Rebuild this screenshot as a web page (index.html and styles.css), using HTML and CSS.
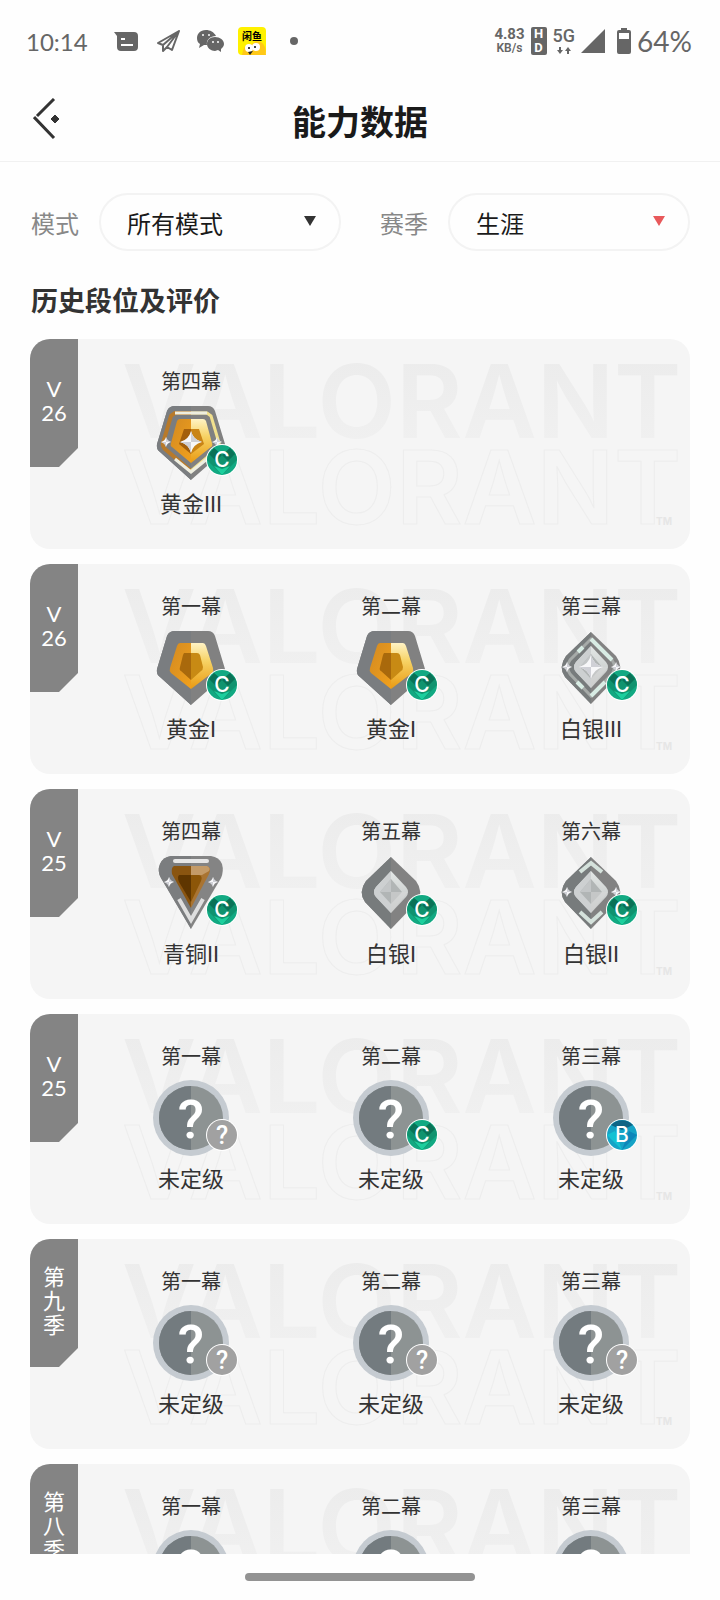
FILE: index.html
```html
<!DOCTYPE html>
<html lang="zh-CN">
<head>
  <meta charset="UTF-8" />
  <meta name="viewport" content="width=device-width, initial-scale=1" />
  <title>能力数据</title>
  <link rel="stylesheet" href="styles.css">
</head>
<body>

<!-- shared shapes -->
<svg class="defs" aria-hidden="true">
  <defs>
    <linearGradient id="goldL" x1="0" y1="0" x2="1" y2="1">
      <stop offset="0" stop-color="#d38a22" /><stop offset="1" stop-color="#f0a01c" />
    </linearGradient>
    <linearGradient id="goldR" x1="0" y1="0" x2="0" y2="1">
      <stop offset="0" stop-color="#fff3c4" /><stop offset=".4" stop-color="#f6d264" /><stop offset="1" stop-color="#e99a12" />
    </linearGradient>
    <linearGradient id="silverR" x1="0" y1="0" x2="0" y2="1">
      <stop offset="0" stop-color="#e3e7e6" /><stop offset="1" stop-color="#bfc2c1" />
    </linearGradient>
    <linearGradient id="fade" x1="0" y1="0" x2="0" y2="1">
      <stop offset="0" stop-color="#ebebeb" /><stop offset="1" stop-color="#f1f1f1" />
    </linearGradient>

    <symbol id="star" viewBox="-10 -10 20 20">
      <path d="M0-10Q2-2 10 0Q2 2 0 10Q-2 2-10 0Q-2-2 0-10Z" fill="#f7f7f9" />
      <path d="M0-10Q2-2 10 0L0 0Z M0 0V10Q-2 2-10 0Z" fill="#cfd0d6" />
    </symbol>
    <symbol id="pentagon" viewBox="0 0 76 76">
      <path d="M22 1H55Q60 1 62 6L72 39Q73 44 70 47L38 75L7 47Q3 44 4 39L14 6Q16 1 22 1Z" fill="#818181" />
      <path d="M22 1H38V75L7 47Q3 44 4 39L14 6Q16 1 22 1Z" fill="#7a7d80" />
    </symbol>
    <symbol id="diamond" viewBox="0 0 76 76">
      <path d="M38 2L63 26Q71 37 64 47L38 74L12 47Q5 37 13 26Z" fill="#828282" />
      <path d="M38 2V74L12 47Q5 37 13 26Z" fill="#777b7c" />
    </symbol>
    <symbol id="silver-gem" viewBox="0 0 76 76">
      <path d="M38 16L53 32Q57 37 53 42L38 58L23 42Q19 37 23 32Z" fill="url(#silverR)" />
      <path d="M38 16V58L23 42Q19 37 23 32Z" fill="#cdd0d1" />
      <path d="M38 24L49 37L38 49L27 37Z" fill="#b1b5b5" />
      <path d="M38 24V37H27Z" fill="#c3c6c7" />
      <path d="M38 37H55L38 58Z" fill="#d9dad9" opacity=".5" />
    </symbol>

    <symbol id="gold1" viewBox="0 0 76 76">
      <use href="#pentagon" />
      <path d="M27 13H38V59L18 43Q16 41 17 38L24 16Q25 13 27 13Z" fill="url(#goldL)" />
      <path d="M38 13H50Q52 13 53 16L60 38Q61 41 59 43L38 59Z" fill="url(#goldR)" />
      <path d="M31 23H38V50L28 41Q26 40 27 37L30 25Z" fill="#a9690c" />
      <path d="M38 23H44Q46 23 47 25L50 37Q50 40 48 41L38 50Z" fill="#c88a14" />
    </symbol>
    <symbol id="gold3" viewBox="0 0 76 76">
      <use href="#pentagon" />
      <path d="M38 8H22L18 11L10 38Q9 41 12 44L38 66" fill="none" stroke="#b87a2a" stroke-width="4" />
      <path d="M38 8H54L58 11L66 38Q67 41 64 44L38 66" fill="none" stroke="#f1e08e" stroke-width="3" />
      <path d="M22 8H54M22 54L38 67L54 54" fill="none" stroke="#eeeee0" stroke-width="3" />
      <path d="M27 14H38V58L19 42Q17 41 18 38L24 16Q25 14 27 14Z" fill="url(#goldL)" />
      <path d="M38 14H50Q52 14 53 16L59 38Q60 41 58 42L38 58Z" fill="url(#goldR)" />
      <path d="M31 24H38V49L26 39Z" fill="#a35f0c" />
      <path d="M38 24H46L51 39L38 49Z" fill="#c98416" />
      <use href="#star" x="27" y="26" width="22" height="22" />
      <use href="#star" x="8" y="32" width="10" height="10" />
      <use href="#star" x="59" y="32" width="10" height="10" />
    </symbol>
    <symbol id="bronze2" viewBox="0 0 76 76">
      <path d="M18 1H58Q66 2 69 9Q71 16 68 23L38 74L8 23Q4 16 7 9Q10 2 18 1Z" fill="#848484" />
      <path d="M18 1H38V74L8 23Q4 16 7 9Q10 2 18 1Z" fill="#7b7d7f" />
      <path d="M22 6H54" stroke="#e6e6e6" stroke-width="4" stroke-linecap="round" />
      <path d="M26 44L38 65L50 44" fill="none" stroke="#dedede" stroke-width="4" />
      <path d="M21 11H38V53L19 19Q18 12 21 11Z" fill="#8a5510" />
      <path d="M38 11H54Q59 13 56 19L38 53Z" fill="#a97432" />
      <path d="M38 11H54Q58 13 56 16L49 20H38Z" fill="#c49b68" />
      <path d="M26 20H38V47L26 27Q24 22 26 20Z" fill="#5f3600" />
      <path d="M38 20H46Q50 21 48 26L38 47Z" fill="#8c5608" />
      <use href="#star" x="11" y="22" width="10" height="10" />
      <use href="#star" x="55" y="22" width="10" height="10" />
    </symbol>
    <symbol id="silver1" viewBox="0 0 76 76">
      <use href="#diamond" />
      <use href="#silver-gem" />
    </symbol>
    <symbol id="silver2" viewBox="0 0 76 76">
      <use href="#diamond" />
      <path d="M27 17L38 8L49 17M27 57L38 67L49 57" fill="none" stroke="#d5e2dc" stroke-width="4" />
      <use href="#silver-gem" />
      <use href="#star" x="9" y="32" width="10" height="10" />
      <use href="#star" x="58" y="32" width="10" height="10" />
    </symbol>
    <symbol id="silver3" viewBox="0 0 76 76">
      <use href="#diamond" />
      <path d="M38 9L59 30Q64 37 59 44L38 66L17 44Q12 37 17 30Z" fill="none" stroke="#a6aaa8" stroke-width="3" />
      <path d="M38 9L59 30M38 66L52 52M25 22L30 17M24 52L30 58" fill="none" stroke="#d8ece4" stroke-width="4" />
      <use href="#silver-gem" />
      <use href="#star" x="26" y="25" width="24" height="24" />
      <use href="#star" x="9" y="32" width="10" height="10" />
      <use href="#star" x="58" y="32" width="10" height="10" />
    </symbol>
    <symbol id="unranked" viewBox="0 0 76 76">
      <circle cx="38" cy="38" r="38" fill="#c5cbd1" />
      <circle cx="38" cy="38" r="32" fill="#8d9393" />
      <path d="M38 6A32 32 0 0 0 38 70Z" fill="#737b7f" />
      <text class="emblem-mark" x="38" y="58" text-anchor="middle">?</text>
    </symbol>

    <symbol id="grade-c" viewBox="0 0 32 32">
      <circle cx="16" cy="16" r="16" fill="#fff" />
      <circle cx="16" cy="16" r="15" fill="#12a982" />
      <path d="M1 16A15 15 0 0 1 8 4L16 11L24 4A15 15 0 0 1 31 16L16 31Z" fill="#10936f" />
      <path d="M8 4L16 11L10 17L3 10Z M24 4L16 11L22 17L29 10Z" fill="#0a7257" />
      <path d="M8 22L16 31L24 22L16 25Z" fill="#1ccf9d" />
      <text class="badge-mark" x="16" y="23" text-anchor="middle">C</text>
    </symbol>
    <symbol id="grade-b" viewBox="0 0 32 32">
      <circle cx="16" cy="16" r="16" fill="#fff" />
      <circle cx="16" cy="16" r="15" fill="#16a3c6" />
      <path d="M5 6A15 15 0 0 1 27 6L16 11Z" fill="#0f6485" />
      <path d="M1 16L9 12L16 31Z" fill="#12c1d3" />
      <path d="M31 16L23 12L16 31Z" fill="#0e86ba" />
      <text class="badge-mark" x="16" y="23" text-anchor="middle">B</text>
    </symbol>
    <symbol id="grade-none" viewBox="0 0 32 32">
      <circle cx="16" cy="16" r="16" fill="#fff" />
      <circle cx="16" cy="16" r="15" fill="#a1a1a1" />
      <text class="badge-mark unknown" x="16" y="25" text-anchor="middle">?</text>
    </symbol>

    <symbol id="wordmark" viewBox="0 0 560 170">
      <text class="wordmark-text" x="0" y="75" fill="url(#fade)">VALORANT</text>
      <text class="wordmark-text" x="0" y="161" fill="none" stroke="#ededed">VALORANT</text>
      <text class="wordmark-tm" x="534" y="162">TM</text>
    </symbol>
  </defs>
</svg>

<div class="status-bar">
  <span class="clock">10:14</span>
  <div class="status-icons">
    <svg viewBox="0 0 28 28" width="28" height="28"><path d="M2 5H22Q26 5 26 9V20Q26 24 22 24H9Q5 24 5 20V9Z" fill="#666" /><path d="M9 12H13M9 18H21" stroke="#fff" stroke-width="2" /></svg>
    <svg viewBox="0 0 28 28" width="28" height="28"><path d="M25 4L4 16L9 18L25 4L18 23L13 20M9 18V24L13 20L25 4" fill="none" stroke="#666" stroke-width="2" stroke-linejoin="round" /></svg>
    <svg viewBox="0 0 28 28" width="28" height="28"><path d="M10 3C4 3 1 7 1 11C1 14 2 16 4 17L3 21L8 18H11C10 13 14 9 20 9C18 5 14 3 10 3Z" fill="#666" /><path d="M19 10C14 10 11 13 11 17C11 21 15 24 19 24L22 23L25 25V22C27 20 28 19 28 17C28 13 24 10 19 10Z" fill="#666" /><g fill="#fff"><circle cx="7" cy="8" r="1" /><circle cx="13" cy="8" r="1" /><circle cx="17" cy="15" r="1" /><circle cx="22" cy="15" r="1" /></g></svg>
    <svg viewBox="0 0 28 28" width="28" height="28"><rect width="28" height="28" rx="4" fill="#fff100" /><path d="M4 28Q5 17 14 17Q18 13 23 15Q28 18 28 28Z" fill="#ffc817" /><circle cx="11" cy="21" r="4" fill="#fff" /><circle cx="18" cy="20" r="4" fill="#fff" /><circle cx="11" cy="21" r="1" /><circle cx="17" cy="20" r="1" /><path d="M10 25L15 24L12 28Z" fill="#222" /><text class="app-name" x="14" y="13" text-anchor="middle">闲鱼</text></svg>
    <svg viewBox="0 0 28 28" width="28" height="28"><circle cx="14" cy="14" r="4" fill="#666" /></svg>
  </div>
  <div class="status-right">
    <span class="speed"><b>4.83</b><small>KB/s</small></span>
    <span class="hd"><span>H</span><span>D</span></span>
    <span class="network">5G
      <svg viewBox="0 0 14 7" width="14" height="7"><path d="M3 7L0 3H2V0H4V3H6ZM11 0L14 4H12V7H10V4H8Z" fill="#666" /></svg>
    </span>
    <svg viewBox="0 0 24 24" width="24" height="24"><path d="M24 0V24H0Z" fill="#666" /></svg>
    <span class="battery">
      <svg viewBox="0 0 14 26" width="14" height="26"><path d="M4 0H10V2H12Q14 2 14 4V24Q14 26 12 26H2Q0 26 0 24V4Q0 2 2 2H4Z" fill="#666" /><rect x="2" y="5" width="10" height="6" fill="#fff" /></svg>
      64%
    </span>
  </div>
</div>

<header class="header">
  <button class="back" type="button" aria-label="返回">
    <svg viewBox="0 0 28 42" width="28" height="42"><path d="M21 1L4 18M1 19L21 40" fill="none" stroke="#333" stroke-width="3" /><path d="M22 17L26 21L22 25L18 21Z" fill="#333" stroke="#333" stroke-linejoin="round" /></svg>
  </button>
  <h1>能力数据</h1>
</header>

<main class="content">
  <form class="filters">
    <div class="filter">
      <label for="mode">模式</label>
      <div class="select-box">
        <select id="mode"><option>所有模式</option></select>
        <svg class="caret" viewBox="0 0 12 10" width="12" height="10"><path d="M0 0H12L6 10Z" /></svg>
      </div>
    </div>
    <div class="filter">
      <label for="season">赛季</label>
      <div class="select-box">
        <select id="season"><option>生涯</option></select>
        <svg class="caret red" viewBox="0 0 12 10" width="12" height="10"><path d="M0 0H12L6 10Z" /></svg>
      </div>
    </div>
  </form>

  <h2>历史段位及评价</h2>

  <section class="card">
    <svg class="watermark" aria-hidden="true"><use href="#wordmark" /></svg>
    <div class="tab">V<br>26</div>
    <div class="acts">
      <div class="act"><span class="act-name">第四幕</span><div class="emblem"><svg class="rank"><use href="#gold3" /></svg><svg class="badge"><use href="#grade-c" /></svg></div><span class="rank-name">黄金III</span></div>
    </div>
  </section>

  <section class="card">
    <svg class="watermark" aria-hidden="true"><use href="#wordmark" /></svg>
    <div class="tab">V<br>26</div>
    <div class="acts">
      <div class="act"><span class="act-name">第一幕</span><div class="emblem"><svg class="rank"><use href="#gold1" /></svg><svg class="badge"><use href="#grade-c" /></svg></div><span class="rank-name">黄金I</span></div>
      <div class="act"><span class="act-name">第二幕</span><div class="emblem"><svg class="rank"><use href="#gold1" /></svg><svg class="badge"><use href="#grade-c" /></svg></div><span class="rank-name">黄金I</span></div>
      <div class="act"><span class="act-name">第三幕</span><div class="emblem"><svg class="rank"><use href="#silver3" /></svg><svg class="badge"><use href="#grade-c" /></svg></div><span class="rank-name">白银III</span></div>
    </div>
  </section>

  <section class="card">
    <svg class="watermark" aria-hidden="true"><use href="#wordmark" /></svg>
    <div class="tab">V<br>25</div>
    <div class="acts">
      <div class="act"><span class="act-name">第四幕</span><div class="emblem"><svg class="rank"><use href="#bronze2" /></svg><svg class="badge"><use href="#grade-c" /></svg></div><span class="rank-name">青铜II</span></div>
      <div class="act"><span class="act-name">第五幕</span><div class="emblem"><svg class="rank"><use href="#silver1" /></svg><svg class="badge"><use href="#grade-c" /></svg></div><span class="rank-name">白银I</span></div>
      <div class="act"><span class="act-name">第六幕</span><div class="emblem"><svg class="rank"><use href="#silver2" /></svg><svg class="badge"><use href="#grade-c" /></svg></div><span class="rank-name">白银II</span></div>
    </div>
  </section>

  <section class="card">
    <svg class="watermark" aria-hidden="true"><use href="#wordmark" /></svg>
    <div class="tab">V<br>25</div>
    <div class="acts">
      <div class="act"><span class="act-name">第一幕</span><div class="emblem"><svg class="rank"><use href="#unranked" /></svg><svg class="badge"><use href="#grade-none" /></svg></div><span class="rank-name">未定级</span></div>
      <div class="act"><span class="act-name">第二幕</span><div class="emblem"><svg class="rank"><use href="#unranked" /></svg><svg class="badge"><use href="#grade-c" /></svg></div><span class="rank-name">未定级</span></div>
      <div class="act"><span class="act-name">第三幕</span><div class="emblem"><svg class="rank"><use href="#unranked" /></svg><svg class="badge"><use href="#grade-b" /></svg></div><span class="rank-name">未定级</span></div>
    </div>
  </section>

  <section class="card">
    <svg class="watermark" aria-hidden="true"><use href="#wordmark" /></svg>
    <div class="tab">第<br>九<br>季</div>
    <div class="acts">
      <div class="act"><span class="act-name">第一幕</span><div class="emblem"><svg class="rank"><use href="#unranked" /></svg><svg class="badge"><use href="#grade-none" /></svg></div><span class="rank-name">未定级</span></div>
      <div class="act"><span class="act-name">第二幕</span><div class="emblem"><svg class="rank"><use href="#unranked" /></svg><svg class="badge"><use href="#grade-none" /></svg></div><span class="rank-name">未定级</span></div>
      <div class="act"><span class="act-name">第三幕</span><div class="emblem"><svg class="rank"><use href="#unranked" /></svg><svg class="badge"><use href="#grade-none" /></svg></div><span class="rank-name">未定级</span></div>
    </div>
  </section>

  <section class="card">
    <svg class="watermark" aria-hidden="true"><use href="#wordmark" /></svg>
    <div class="tab">第<br>八<br>季</div>
    <div class="acts">
      <div class="act"><span class="act-name">第一幕</span><div class="emblem"><svg class="rank"><use href="#unranked" /></svg><svg class="badge"><use href="#grade-none" /></svg></div><span class="rank-name">未定级</span></div>
      <div class="act"><span class="act-name">第二幕</span><div class="emblem"><svg class="rank"><use href="#unranked" /></svg><svg class="badge"><use href="#grade-none" /></svg></div><span class="rank-name">未定级</span></div>
      <div class="act"><span class="act-name">第三幕</span><div class="emblem"><svg class="rank"><use href="#unranked" /></svg><svg class="badge"><use href="#grade-none" /></svg></div><span class="rank-name">未定级</span></div>
    </div>
  </section>
</main>

<div class="home-bar"><span></span></div>

</body>
</html>
```

FILE: styles.css
```css
* {
  box-sizing: border-box;
}
body {
  margin: 0;
  height: 100vh;
  display: flex;
  flex-direction: column;
  background: #fefefe;
  color: #333;
  font-family: "Noto Sans CJK SC", sans-serif;
}
.defs {
  position: absolute;
  width: 0;
  height: 0;
}

/* status bar */
.status-bar {
  flex: none;
  display: flex;
  align-items: center;
  height: 80px;
  padding: 2px 28px 0 26px;
  color: #666;
  font-family: Lato, sans-serif;
}
.clock {
  width: 86px;
  font-size: 24px;
}
.status-icons {
  display: flex;
  gap: 14px;
}
.status-right {
  display: flex;
  align-items: center;
  gap: 6px;
  margin-left: auto;
}
.speed {
  display: flex;
  flex-direction: column;
  align-items: center;
  font-family: Roboto, sans-serif;
  font-size: 15px;
  line-height: 14px;
}
.speed small {
  font-size: 12px;
  font-weight: 600;
}
.hd {
  display: flex;
  flex-direction: column;
  width: 16px;
  border-radius: 2px;
  background: #666;
  color: #fff;
  font: bold 13px/14px Roboto, sans-serif;
  text-align: center;
}
.network {
  display: flex;
  flex-direction: column;
  align-items: center;
  gap: 4px;
  font: 500 18px/15px Roboto, sans-serif;
}
.battery {
  display: flex;
  align-items: center;
  gap: 6px;
  margin-left: 6px;
  font-size: 28px;
}
.app-name {
  font: bold 10px "Noto Sans CJK SC", sans-serif;
}

/* header */
.header {
  flex: none;
  display: grid;
  grid-template-columns: 60px 1fr 60px;
  align-items: center;
  height: 82px;
  padding: 0 30px;
  border-bottom: 1px solid #f1f1f1;
}
.header h1 {
  margin: 0;
  color: #1a1a1a;
  font-size: 34px;
  line-height: 40px;
  text-align: center;
}
.back {
  display: flex;
  padding: 0 3px 4px;
  border: 0;
  background: none;
  cursor: pointer;
}

/* filters */
.content {
  flex: 1;
  min-height: 0;
  padding: 31px 30px 0;
  overflow-y: auto;
  scrollbar-width: none;
}
.filters {
  display: grid;
  grid-template-columns: 1fr 1fr;
  gap: 38px;
}
.filter {
  display: flex;
  align-items: center;
  gap: 20px;
  padding-left: 1px;
  color: #888;
  font-size: 24px;
}
.select-box {
  position: relative;
  flex: 1;
}
.select-box select {
  width: 100%;
  height: 58px;
  padding: 0 48px 0 26px;
  border: 2px solid #f3f3f3;
  border-radius: 29px;
  background: #fefefe;
  color: #1a1a1a;
  font-family: inherit;
  font-size: 24px;
  appearance: none;
}
.caret {
  position: absolute;
  top: 23px;
  right: 25px;
  fill: #333;
  pointer-events: none;
}
.caret.red {
  fill: #e8595b;
}
h2 {
  margin: 33px 0 23px;
  padding-left: 1px;
  font-size: 27px;
  line-height: 32px;
}

/* season cards */
.card {
  position: relative;
  display: flex;
  align-items: flex-start;
  height: 210px;
  margin-bottom: 15px;
  border-radius: 20px;
  background: #f5f5f5;
  overflow: hidden;
}
.watermark {
  position: absolute;
  top: 24px;
  right: 8px;
  width: 560px;
  height: 170px;
}
.wordmark-text {
  font: 600 102px Inter, sans-serif;
}
.wordmark-tm {
  font: bold 10px Inter, sans-serif;
  fill: #e6e6e6;
}
.tab {
  position: relative;
  flex: none;
  display: flex;
  align-items: center;
  justify-content: center;
  width: 48px;
  height: 128px;
  padding-bottom: 4px;
  background: #848484;
  clip-path: polygon(0 0, 100% 0, 100% 109px, 29px 100%, 0 100%);
  color: #fff;
  font-family: Lato, "Noto Sans CJK SC", sans-serif;
  font-size: 22px;
  line-height: 24px;
  text-align: center;
}
.acts {
  position: relative;
  flex: 1;
  display: grid;
  grid-template-columns: repeat(3, 1fr);
  margin-right: -1px;
  padding: 30px 0 0 13px;
}
.act {
  display: flex;
  flex-direction: column;
  align-items: center;
}
.act-name {
  font-size: 20px;
  line-height: 24px;
}
.emblem {
  position: relative;
  width: 76px;
  height: 76px;
  margin: 12px 0 10px;
}
.rank {
  display: block;
  width: 76px;
  height: 76px;
}
.badge {
  position: absolute;
  right: -9px;
  bottom: 5px;
  width: 32px;
  height: 32px;
}
.emblem-mark {
  fill: #fff;
  font: 500 54px Roboto, sans-serif;
}
.badge-mark {
  fill: #fff;
  font: 500 21px Inter, sans-serif;
}
.badge-mark.unknown {
  font: 500 25px Roboto, sans-serif;
}
.rank-name {
  font-family: Roboto, "Noto Sans CJK SC", sans-serif;
  font-size: 22px;
  line-height: 28px;
}

/* bottom gesture bar */
.home-bar {
  flex: none;
  display: flex;
  align-items: center;
  justify-content: center;
  height: 46px;
}
.home-bar span {
  width: 32%;
  height: 8px;
  border-radius: 4px;
  background: #939393;
}
```
